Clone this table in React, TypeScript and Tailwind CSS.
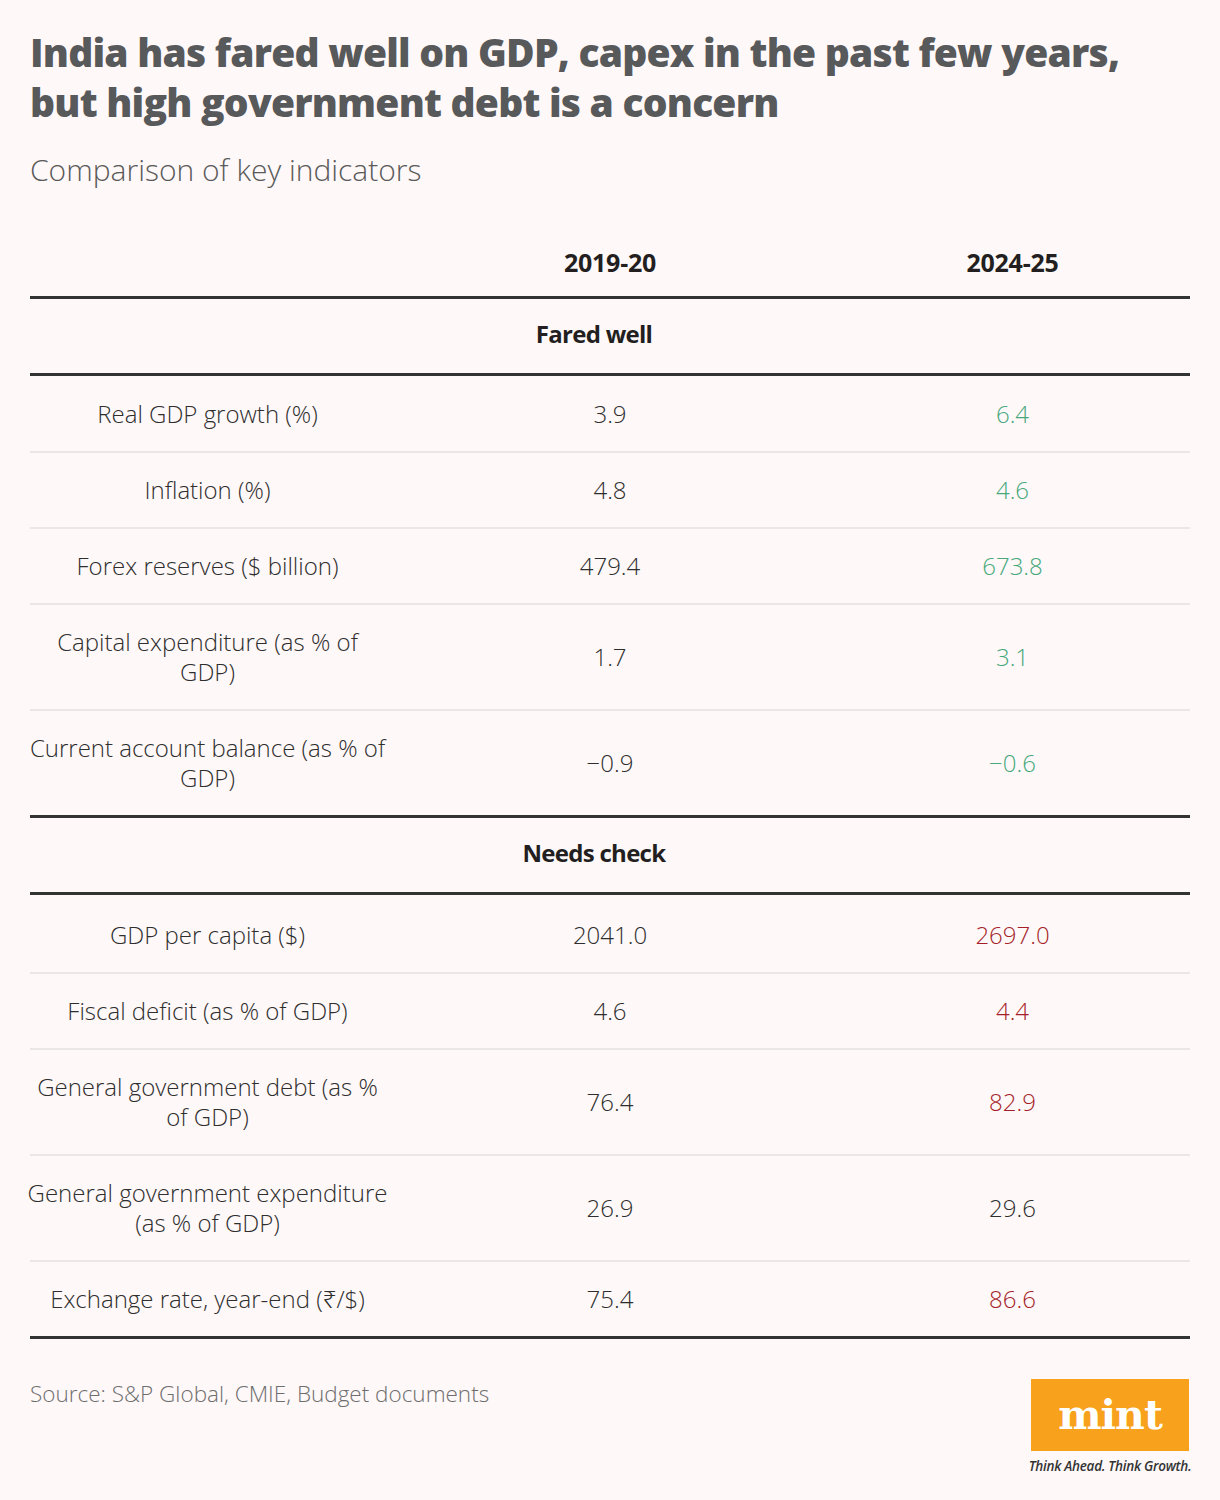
import React from 'react'

type Row = {
  label: string[]
  a: string
  b: string
  tone?: 'good' | 'bad' | 'plain'
}

const faredWell: Row[] = [
  { label: ['Real GDP growth (%)'], a: '3.9', b: '6.4', tone: 'good' },
  { label: ['Inflation (%)'], a: '4.8', b: '4.6', tone: 'good' },
  { label: ['Forex reserves ($ billion)'], a: '479.4', b: '673.8', tone: 'good' },
  { label: ['Capital expenditure (as % of', 'GDP)'], a: '1.7', b: '3.1', tone: 'good' },
  { label: ['Current account balance (as % of', 'GDP)'], a: '−0.9', b: '−0.6', tone: 'good' },
]

const needsCheck: Row[] = [
  { label: ['GDP per capita ($)'], a: '2041.0', b: '2697.0', tone: 'bad' },
  { label: ['Fiscal deficit (as % of GDP)'], a: '4.6', b: '4.4', tone: 'bad' },
  { label: ['General government debt (as %', 'of GDP)'], a: '76.4', b: '82.9', tone: 'bad' },
  { label: ['General government expenditure', '(as % of GDP)'], a: '26.9', b: '29.6', tone: 'plain' },
  { label: ['Exchange rate, year-end (₹/$)'], a: '75.4', b: '86.6', tone: 'bad' },
]

const toneClass = {
  good: 'text-[#47a87c]',
  bad: 'text-[#a51f2a]',
  plain: 'text-[#2e2e2e]',
}

// one table row, light rule under it unless it's the last in a group
function DataRow({ row, top, last }: { row: Row; top: string; last: boolean }) {
  return (
    <div
      className={
        'grid grid-cols-[355px_450px_355px] items-center pb-[22px] text-[24px] font-light leading-[30px] ' +
        top +
        ' ' +
        (last ? '' : 'border-b-2 border-[#ece7e7]')
      }
    >
      <div className="flex flex-col items-center whitespace-nowrap text-[#2e2e2e]">
        {row.label.map((l) => (
          <span key={l}>{l}</span>
        ))}
      </div>
      <div className="text-center text-[#2e2e2e]">{row.a}</div>
      <div className={'text-center ' + toneClass[row.tone ?? 'plain']}>{row.b}</div>
    </div>
  )
}

function GroupHead({ title }: { title: string }) {
  return (
    <div className="grid grid-cols-[355px_450px_355px] border-y-[3px] border-[#333333] pt-[20px] pb-[24px] text-[24px] font-bold leading-[30px] tracking-[-0.03em] text-[#231f20]">
      <div />
      <div className="pr-[32px] text-center">{title}</div>
      <div />
    </div>
  )
}

export default function App() {
  return (
    <div
      className="min-h-[1500px] w-[1220px] bg-[#fef8f8] px-[30px] pt-[27px]"
      style={{ fontFamily: '"Open Sans", "Noto Sans", sans-serif' }}
    >
      <h1 className="text-[39px] font-extrabold leading-[50px] tracking-[-0.02em] text-[#58595b]">
        India has fared well on GDP, capex in the past few years,
        <br />
        but high government debt is a concern
      </h1>
      <p className="mt-[25px] text-[30px] font-light leading-[36px] text-[#5a5a5a]">
        Comparison of key indicators
      </p>

      <div className="mt-[59px]">
        <div className="grid grid-cols-[355px_450px_355px] pb-[19px] text-[25px] font-bold leading-[30px] tracking-[-0.01em] text-[#231f20]">
          <div />
          <div className="text-center">2019-20</div>
          <div className="text-center">2024-25</div>
        </div>

        <GroupHead title="Fared well" />
        {faredWell.map((r, i) => (
          <DataRow
            key={r.label[0]}
            row={r}
            top={i === 0 ? 'pt-[23px]' : 'pt-[22px]'}
            last={i === faredWell.length - 1}
          />
        ))}

        <GroupHead title="Needs check" />
        {needsCheck.map((r, i) => (
          <DataRow
            key={r.label[0]}
            row={r}
            top={i === 0 ? 'pt-[25px]' : 'pt-[22px]'}
            last={i === needsCheck.length - 1}
          />
        ))}
        <div className="h-[3px] bg-[#333333]" />
      </div>

      <div className="mt-[40px] flex items-start justify-between">
        <p className="text-[22.5px] font-light leading-[30px] text-[#6e6e6e]">
          Source: S&amp;P Global, CMIE, Budget documents
        </p>
        <div className="flex w-[160px] flex-col items-center">
          <div className="flex h-[72px] w-[158px] items-center justify-center bg-[#f8a11c]">
            <span
              className="text-[41px] font-bold leading-none tracking-tight text-white"
              style={{ fontFamily: '"DejaVu Serif", "Liberation Serif", serif' }}
            >
              mint
            </span>
          </div>
          <span className="mt-[5px] whitespace-nowrap text-[13.5px] font-semibold italic tracking-[-0.02em] text-[#333]">
            Think Ahead. Think Growth.
          </span>
        </div>
      </div>
    </div>
  )
}
